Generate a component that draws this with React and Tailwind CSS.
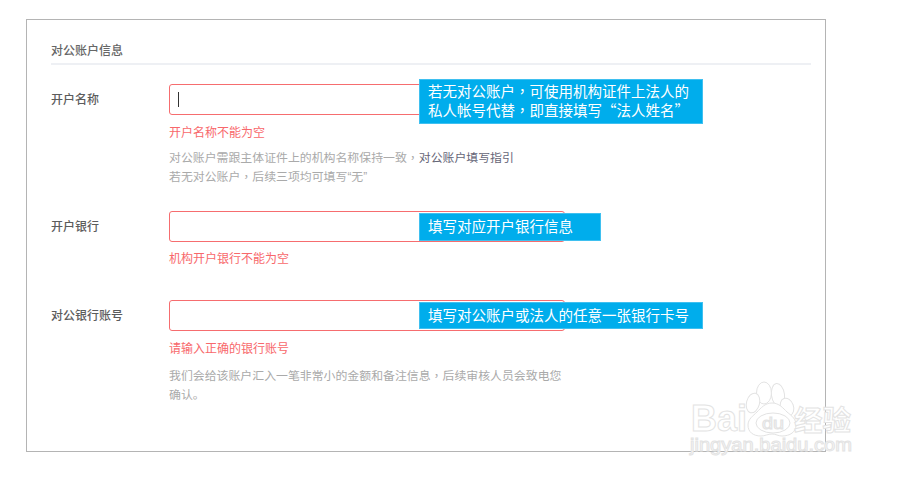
import React from 'react';

const sans = '[font-family:"Liberation_Sans","Noto_Sans_CJK_SC",sans-serif]';

// the screenshot's comma sits in the middle of its cell, as the TC face draws it
function Comma() {
  return <span className='leading-[0] [font-family:"Noto_Sans_CJK_TC",sans-serif]'>，</span>;
}

function Callout({ className, children }) {
  return (
    <div className={`absolute left-[250px] flex flex-col justify-center border border-[#3fc0f0] bg-[#00adec] pb-[3px] pl-[8px] text-[14.5px] leading-[19px] whitespace-nowrap text-white [font-family:"Noto_Sans_CJK_SC",sans-serif] ${className}`}>
      {children}
    </div>
  );
}

function Field({ label, error, errorGap, mb, callout, caret, children }) {
  return (
    <div className={`flex ${mb}`}>
      <div className="w-[118px] shrink-0 pt-[8px] text-xs leading-[16px] font-medium text-[#5c5c5c]">{label}</div>
      <div className="w-[396px]">
        <div className="relative">
          <div className="flex h-[31px] items-center rounded-[3px] border border-[#f66d6f] bg-white pl-[8px]">
            {caret && <div className="h-[15px] w-px bg-[#333]" />}
          </div>
          {callout}
        </div>
        <div className={`${errorGap} text-xs leading-[16px] text-[#f8686b]`}>{error}</div>
        {children}
      </div>
    </div>
  );
}

function Watermark() {
  return (
    <svg className="absolute top-[375px] left-[680px]" width="190" height="90" viewBox="680 375 190 90" fill="#fff" stroke="#e3e3e3" strokeWidth="1">
      <ellipse cx="764" cy="393" rx="7.5" ry="11" />
      <ellipse cx="778" cy="395" rx="6.5" ry="11.5" transform="rotate(-8 778 395)" />
      <ellipse cx="787" cy="407" rx="6.5" ry="9" transform="rotate(-20 787 407)" />
      <ellipse cx="753" cy="403" rx="6.5" ry="10" transform="rotate(15 753 403)" />
      <path d="M772 403c7 0 11 5 15 9 5 4 9 7 9 13 0 7-6 11-14 11-4 0-6-2-10-2s-7 2-11 2c-8 0-13-4-13-11 0-6 5-9 9-13s8-9 15-9z" />
      <ellipse cx="773" cy="423" rx="17" ry="10" />
      <g fontFamily="'Liberation Sans', sans-serif">
        <text x="691" y="431" fontSize="37" fontWeight="700" textLength="56" lengthAdjust="spacingAndGlyphs">Bai</text>
        <text x="762" y="429" fontSize="16" textLength="22" lengthAdjust="spacingAndGlyphs">du</text>
        <text x="690" y="451" fontSize="18" textLength="162" lengthAdjust="spacingAndGlyphs">jingyan.baidu.com</text>
      </g>
      <text x="794" y="431" fontSize="28" fontWeight="700" fontFamily="'Noto Sans CJK SC', sans-serif" textLength="57" lengthAdjust="spacingAndGlyphs">经验</text>
    </svg>
  );
}

export default function App() {
  return (
    <div className={`relative h-[478px] w-[901px] overflow-hidden bg-white pt-[19px] pl-[26px] ${sans}`}>
      <div className="h-[433px] w-[800px] border border-[#b4b4b4] bg-white pt-[23px] pr-[14px] pl-[24px]">
        <div className="mb-[19px] border-b-2 border-[#eef0f4] pb-[4px] text-xs leading-[16px] font-medium text-[#666]">对公账户信息</div>

        <Field
          label="开户名称"
          error="开户名称不能为空"
          errorGap="mt-[10px]"
          mb="mb-[24px]"
          caret
          callout={
            <Callout className="top-[-5px] h-[45px] w-[284px]">
              <div>若无对公账户<Comma />可使用机构证件上法人的</div>
              <div>私人帐号代替<Comma />即直接填写“法人姓名”</div>
            </Callout>
          }
        >
          <div className="mt-[8px] text-[11.9px] leading-[19px] text-[#aaa]">
            <div>
              对公账户需跟主体证件上的机构名称保持一致<Comma /><span className="text-[#667]">对公账户填写指引</span>
            </div>
            <div>若无对公账户<Comma />后续三项均可填写“无”</div>
          </div>
        </Field>

        <Field
          label="开户银行"
          error="机构开户银行不能为空"
          errorGap="mt-[9px]"
          mb="mb-[33px]"
          callout={<Callout className="top-[2px] h-[28px] w-[182px]">填写对应开户银行信息</Callout>}
        />

        <Field
          label="对公银行账号"
          error="请输入正确的银行账号"
          errorGap="mt-[10px]"
          mb=""
          callout={<Callout className="top-[2px] h-[27px] w-[284px]">填写对公账户或法人的任意一张银行卡号</Callout>}
        >
          <div className="mt-[10px] text-[11.9px] leading-[19px] text-[#aaa]">
            <div>我们会给该账户汇入一笔非常小的金额和备注信息<Comma />后续审核人员会致电您</div>
            <div>确认。</div>
          </div>
        </Field>
      </div>
      <Watermark />
    </div>
  );
}
